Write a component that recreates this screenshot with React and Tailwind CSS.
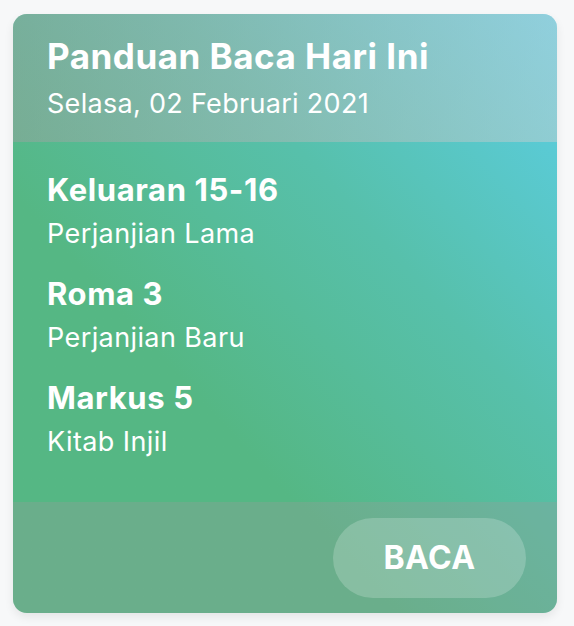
export default function App() {
  const items = [
    { t: "Keluaran 15-16", s: "Perjanjian Lama" },
    { t: "Roma 3", s: "Perjanjian Baru" },
    { t: "Markus 5", s: "Kitab Injil" },
  ];
  return (
    <div className="min-h-screen w-full bg-[#f7f8f9] pt-[14px] pl-[13px]" style={{ fontFamily: "Inter, 'Noto Sans', sans-serif" }}>
      <div className="w-[544px] h-[599px] rounded-[14px] overflow-hidden flex flex-col text-white shadow-[0_4px_10px_rgba(0,0,0,0.08)] bg-linear-to-tr from-[#55b784] from-35% via-[#57c0ab] via-65% to-[#5ccfe8]">
        <div className="h-[128px] shrink-0 bg-linear-to-r from-[#a0a0a0]/45 to-[#d0d0d0]/45 pl-[34px] pt-[21px]">
          <div className="text-[35px] leading-[42px] font-bold tracking-[0.5px]">Panduan Baca Hari Ini</div>
          <div className="text-[27px] leading-[32px] mt-[11px] tracking-[0.3px]">Selasa, 02 Februari 2021</div>
        </div>
        <div className="h-[360px] shrink-0 pl-[34px] pt-[30px] flex flex-col gap-[26px]">
          {items.map((it) => (
            <div key={it.t} className="flex flex-col">
              <div className="text-[31px] leading-[36px] font-bold tracking-[0.6px]">{it.t}</div>
              <div className="text-[27px] leading-[32px] mt-[10px] tracking-[0.4px]">{it.s}</div>
            </div>
          ))}
        </div>
        <div className="flex-1 bg-[#9c9c9c]/30 flex items-center justify-end pr-[31px]">
          <button className="w-[193px] h-[80px] rounded-full bg-white/20 text-white font-bold text-[32px] leading-none tracking-[0.4px]">BACA</button>
        </div>
      </div>
    </div>
  );
}
